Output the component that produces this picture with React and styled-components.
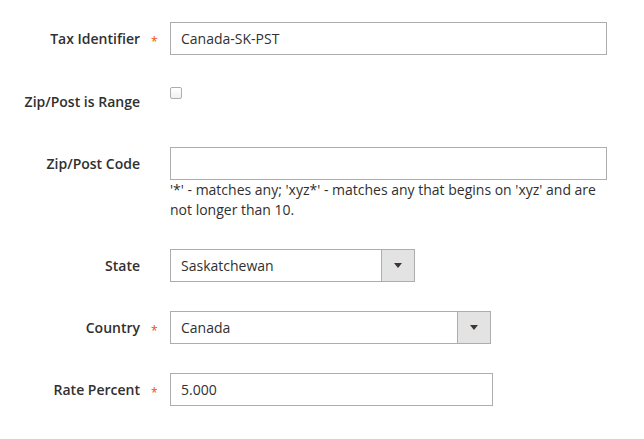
import React from "react";
import styled, { createGlobalStyle } from "styled-components";

const Global = createGlobalStyle`
  html, body { margin: 0; padding: 0; background: #fff; }
  body { font-family: "Open Sans", "Liberation Sans", sans-serif; color: #303030; }
  * { box-sizing: border-box; }
`;

const Form = styled.div`
  display: flex;
  flex-direction: column;
  gap: 29px;
  padding-top: 22px;
  width: 644px;
`;

const Row = styled.div`
  display: flex;
  align-items: flex-start;
`;

const Label = styled.div`
  position: relative;
  width: 170px;
  flex: none;
  padding-right: 30px;
  text-align: right;
  font-size: 14px;
  font-weight: 600;
  line-height: 20px;
  padding-top: ${(p) => p.$pt ?? 7}px;
  padding-bottom: ${(p) => p.$pb ?? 6}px;
  white-space: nowrap;
  ${(p) =>
    p.$required &&
    `
    &::after {
      content: "*";
      position: absolute;
      left: 151px;
      top: ${(p.$pt ?? 7) + 3}px;
      color: #eb5202;
      font-size: 12px;
      font-weight: 400;
      line-height: 20px;
    }
  `}
`;

const Control = styled.div`
  display: flex;
  flex-direction: column;
  width: ${(p) => p.$w}px;
`;

const Input = styled.div`
  height: 33px;
  border: 1px solid #adadad;
  background: #fff;
  padding: 0 10px;
  font-size: 14px;
  line-height: 31px;
  color: #303030;
`;

const Note = styled.div`
  font-size: 14px;
  line-height: 20px;
  color: #303030;
  padding-right: 2px;
`;

const Checkbox = styled.span`
  display: block;
  margin-top: 3px;
  width: 12px;
  height: 12px;
  border: 1px solid #adadad;
  border-radius: 2px;
  background: linear-gradient(#fff, #f0f0f0);
`;

const Select = styled.div`
  display: flex;
  height: 33px;
  border: 1px solid #adadad;
  background: #fff;
`;

const SelectValue = styled.div`
  flex: 1;
  padding: 0 10px;
  font-size: 14px;
  line-height: 31px;
`;

const SelectButton = styled.div`
  width: 33px;
  flex: none;
  background: #e3e3e3;
  border-left: 1px solid #adadad;
  display: flex;
  align-items: center;
  justify-content: center;
  &::after {
    content: "";
    width: 0;
    height: 0;
    border-left: 4px solid transparent;
    border-right: 4px solid transparent;
    border-top: 5px solid #41362f;
  }
`;

export default function App() {
  return (
    <>
      <Global />
      <Form>
        <Row>
          <Label $required>Tax Identifier</Label>
          <Control $w={437}>
            <Input>Canada-SK-PST</Input>
          </Control>
        </Row>
        <Row>
          <Label $pt={8} $pb={6}>Zip/Post is Range</Label>
          <Checkbox />
        </Row>
        <Row>
          <Label>Zip/Post Code</Label>
          <Control $w={437}>
            <Input />
            <Note>
              '*' - matches any; 'xyz*' - matches any that begins on 'xyz' and are not longer than 10.
            </Note>
          </Control>
        </Row>
        <Row>
          <Label>State</Label>
          <Control $w={245}>
            <Select>
              <SelectValue>Saskatchewan</SelectValue>
              <SelectButton />
            </Select>
          </Control>
        </Row>
        <Row>
          <Label $required>Country</Label>
          <Control $w={321}>
            <Select>
              <SelectValue>Canada</SelectValue>
              <SelectButton />
            </Select>
          </Control>
        </Row>
        <Row>
          <Label $required>Rate Percent</Label>
          <Control $w={323}>
            <Input>5.000</Input>
          </Control>
        </Row>
      </Form>
    </>
  );
}
